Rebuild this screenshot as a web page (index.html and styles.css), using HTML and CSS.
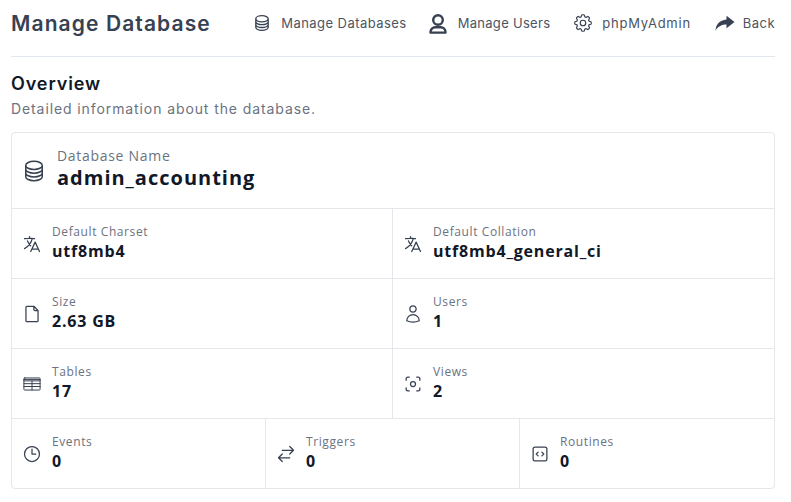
FILE: index.html
```html
<!DOCTYPE html>
<html lang="en">
<head>
<meta charset="utf-8">
<title>Manage Database</title>
<link rel="stylesheet" href="styles.css">
</head>
<body>
<svg class="defs" width="0" height="0" aria-hidden="true">
  <defs>
    <symbol id="i-db" viewBox="0 0 24 24"><path d="M20.25 6.375c0 2.278-3.694 4.125-8.25 4.125S3.75 8.653 3.75 6.375m16.5 0c0-2.278-3.694-4.125-8.25-4.125S3.75 4.097 3.75 6.375m16.5 0v11.25c0 2.278-3.694 4.125-8.25 4.125s-8.25-1.847-8.25-4.125V6.375m16.5 0v3.75m-16.5-3.75v3.75m16.5 0v3.75C20.25 16.153 16.556 18 12 18s-8.25-1.847-8.25-4.125v-3.75m16.5 0c0 2.278-3.694 4.125-8.25 4.125s-8.25-1.847-8.25-4.125"/></symbol>
    <symbol id="i-lang" viewBox="0 0 24 24"><path d="m10.5 21 5.25-11.25L21 21m-9-3h7.5M3 5.621a48.474 48.474 0 0 1 6-.371m0 0c1.12 0 2.233.038 3.334.114M9 5.25V3m3.334 2.364C11.176 10.658 7.69 15.08 3 17.502m9.334-12.138c.896.061 1.785.147 2.666.257m-4.589 8.495a18.023 18.023 0 0 1-3.827-5.802"/></symbol>
    <symbol id="i-doc" viewBox="0 0 24 24"><path d="M6 2.75h8.2L19.25 7.8V20a1.25 1.25 0 0 1-1.25 1.25H6A1.25 1.25 0 0 1 4.75 20V4A1.25 1.25 0 0 1 6 2.75ZM14.2 2.75V6.5a1.3 1.3 0 0 0 1.3 1.3h3.75"/></symbol>
    <symbol id="i-user" viewBox="0 0 24 24"><path d="M15.75 6a3.75 3.75 0 1 1-7.5 0 3.75 3.75 0 0 1 7.5 0ZM4.501 20.118a7.5 7.5 0 0 1 14.998 0A17.933 17.933 0 0 1 12 21.75c-2.676 0-5.216-.584-7.499-1.632Z"/></symbol>
    <symbol id="i-user-bold" viewBox="0 0 24 24"><path d="M16.800 9a4.800 4.800 0 1 1-9.600 0 4.800 4.800 0 0 1 9.600 0ZM4.500 21.600v-.6a4.800 4.800 0 0 1 4.800-4.800h5.400a4.800 4.800 0 0 1 4.800 4.800v.6Z"/></symbol>
    <symbol id="i-table" viewBox="0 0 24 24"><path d="M3.200 4.750h17.600a.9.9 0 0 1 .9.9v12.700a.9.9 0 0 1-.9.9H3.200a.9.9 0 0 1-.9-.9V5.650a.9.9 0 0 1 .9-.9ZM2.300 6.500h19.400M2.300 8.250h19.400M2.300 11.600h19.400M2.300 15h19.400M12 8.250v11"/></symbol>
    <symbol id="i-view" viewBox="0 0 24 24"><path d="M7.500 3.750H6A2.250 2.250 0 0 0 3.750 6v1.500M16.500 3.750H18A2.250 2.250 0 0 1 20.250 6v1.500m0 9V18A2.250 2.250 0 0 1 18 20.250h-1.500m-9 0H6A2.250 2.250 0 0 1 3.750 18v-1.500M15 12a3 3 0 1 1-6 0 3 3 0 0 1 6 0Z"/></symbol>
    <symbol id="i-clock" viewBox="0 0 24 24"><path d="M12 6v6h4.500m4.500 0a9 9 0 1 1-18 0 9 9 0 0 1 18 0Z"/></symbol>
    <symbol id="i-swap" viewBox="0 0 24 24"><path d="M7.500 21 3 16.500m0 0L7.500 12M3 16.500h13.500m0-13.500L21 7.500m0 0L16.500 12M21 7.500H7.500"/></symbol>
    <symbol id="i-code" viewBox="0 0 24 24"><path d="M14.250 9.750 16.500 12l-2.250 2.250m-4.500 0L7.500 12l2.250-2.250M6 20.250h12A2.250 2.250 0 0 0 20.250 18V6A2.250 2.250 0 0 0 18 3.750H6A2.250 2.250 0 0 0 3.750 6v12A2.250 2.250 0 0 0 6 20.250Z"/></symbol>
    <symbol id="i-cog" viewBox="0 0 24 24"><path d="M10.343 3.94c.09-.542.56-.94 1.11-.94h1.093c.55 0 1.02.398 1.11.94l.149.894c.07.424.384.764.78.93.398.164.855.142 1.205-.108l.737-.527a1.125 1.125 0 0 1 1.45.12l.773.774c.39.389.44 1.002.12 1.45l-.527.737c-.25.35-.272.806-.107 1.204.165.397.505.71.93.78l.893.15c.543.09.94.559.94 1.109v1.094c0 .55-.397 1.02-.94 1.11l-.894.149c-.424.07-.764.383-.929.78-.165.398-.143.854.107 1.204l.527.738c.32.447.269 1.06-.12 1.45l-.774.773a1.125 1.125 0 0 1-1.449.12l-.738-.527c-.35-.25-.806-.272-1.203-.107-.398.165-.71.505-.781.929l-.149.894c-.09.542-.56.94-1.11.94h-1.094c-.55 0-1.019-.398-1.11-.94l-.148-.894c-.071-.424-.384-.764-.781-.93-.398-.164-.854-.142-1.204.108l-.738.527c-.447.32-1.06.269-1.45-.12l-.773-.774a1.125 1.125 0 0 1-.12-1.45l.527-.737c.25-.35.272-.806.108-1.204-.165-.397-.506-.71-.93-.78l-.894-.15c-.542-.09-.94-.56-.94-1.109v-1.094c0-.55.398-1.02.94-1.11l.894-.149c.424-.07.765-.383.93-.78.165-.398.143-.854-.108-1.204l-.526-.738a1.125 1.125 0 0 1 .12-1.45l.773-.773a1.125 1.125 0 0 1 1.45-.12l.737.527c.35.25.807.272 1.204.107.397-.165.71-.505.78-.929l.15-.894ZM15 12a3 3 0 1 1-6 0 3 3 0 0 1 6 0Z"/></symbol>
  </defs>
</svg>

<header class="topbar">
  <h1 class="title">Manage Database</h1>
  <nav class="nav">
    <a class="nav-link link-db"><svg class="ico ico-nav-db"><use href="#i-db"/></svg>Manage Databases</a>
    <a class="nav-link link-users"><svg class="ico ico-nav-user"><use href="#i-user-bold"/></svg>Manage Users</a>
    <a class="nav-link link-pma"><svg class="ico ico-nav-cog"><use href="#i-cog"/></svg>phpMyAdmin</a>
    <a class="nav-link link-back"><svg class="ico-back" viewBox="0 0 20 20"><path d="M11.500 2.700 19.500 9l-8 6.300v-3.700C6.800 11.600 3.100 13.200.5 17.800c.3-6.200 4-10.800 11-11.400Z"/></svg>Back</a>
  </nav>
</header>

<section class="intro">
  <h2 class="section-title">Overview</h2>
  <p class="section-sub">Detailed information about the database.</p>
</section>

<section class="card">
  <div class="row row-name">
    <div class="cell cell-name">
      <svg class="ico ico-lg"><use href="#i-db"/></svg>
      <div class="text text-lg"><div class="label label-lg">Database Name</div><div class="value value-lg">admin_accounting</div></div>
    </div>
  </div>
  <div class="row row-2">
    <div class="cell"><svg class="ico"><use href="#i-lang"/></svg><div class="text"><div class="label">Default Charset</div><div class="value">utf8mb4</div></div></div>
    <div class="cell"><svg class="ico"><use href="#i-lang"/></svg><div class="text"><div class="label">Default Collation</div><div class="value">utf8mb4_general_ci</div></div></div>
  </div>
  <div class="row row-2">
    <div class="cell"><svg class="ico"><use href="#i-doc"/></svg><div class="text"><div class="label">Size</div><div class="value">2.63 GB</div></div></div>
    <div class="cell"><svg class="ico"><use href="#i-user"/></svg><div class="text"><div class="label">Users</div><div class="value">1</div></div></div>
  </div>
  <div class="row row-2">
    <div class="cell"><svg class="ico ico-thin"><use href="#i-table"/></svg><div class="text"><div class="label">Tables</div><div class="value">17</div></div></div>
    <div class="cell"><svg class="ico"><use href="#i-view"/></svg><div class="text"><div class="label">Views</div><div class="value">2</div></div></div>
  </div>
  <div class="row row-3">
    <div class="cell"><svg class="ico"><use href="#i-clock"/></svg><div class="text"><div class="label">Events</div><div class="value">0</div></div></div>
    <div class="cell"><svg class="ico"><use href="#i-swap"/></svg><div class="text"><div class="label">Triggers</div><div class="value">0</div></div></div>
    <div class="cell"><svg class="ico"><use href="#i-code"/></svg><div class="text"><div class="label">Routines</div><div class="value">0</div></div></div>
  </div>
</section>
</body>
</html>
```

FILE: styles.css
```css
* { box-sizing: border-box; }
html, body { margin: 0; padding: 0; background: #fff; }
body { padding: 0 16px 0 11px; font-family: "Open Sans", sans-serif; overflow: hidden; }
.defs { position: absolute; }

.topbar {
  height: 57px;
  display: flex;
  align-items: center;
  justify-content: space-between;
  padding-bottom: 10px;
  border-bottom: 1px solid #e2e8f0;
}
.title {
  margin: 0;
  font-family: Inter, sans-serif;
  font-size: 21px;
  font-weight: 600;
  letter-spacing: 1.1px;
  color: #374151;
}
.nav { display: flex; align-items: center; gap: 20px; }
.nav-link {
  display: flex;
  align-items: center;
  font-family: Inter, sans-serif;
  font-size: 13px;
  letter-spacing: 0.45px;
  color: #4b5563;
}
.link-db { gap: 10px; margin-right: -1px; }
.link-users { gap: 8px; letter-spacing: 0.3px; }
.link-pma { gap: 8px; margin-left: 2px; letter-spacing: 0.75px; }
.link-back { gap: 8px; margin-left: 4px; }

.ico {
  width: 20px;
  height: 20px;
  flex: none;
  fill: none;
  stroke: #374151;
  stroke-width: 1.5;
  stroke-linecap: round;
  stroke-linejoin: round;
}
.ico-thin { stroke-width: 1.2; }
.ico-nav-db { width: 18px; height: 18px; stroke-width: 1.8; }
.ico-nav-user { width: 24px; height: 24px; stroke-width: 2.4; }
.ico-nav-cog { width: 22px; height: 22px; stroke-width: 1.3; }
.ico-back { width: 20px; height: 20px; fill: #374151; flex: none; }
.ico-lg { width: 24px; height: 24px; }

.intro { padding-top: 15px; height: 75px; }
.section-title {
  margin: 0;
  font-family: Inter, sans-serif;
  font-size: 18px;
  line-height: 24px;
  font-weight: 600;
  letter-spacing: 0.9px;
  color: #111827;
}
.section-sub {
  margin: 3px 0 0;
  font-family: Inter, sans-serif;
  font-size: 14px;
  line-height: 20px;
  letter-spacing: 0.9px;
  color: #6b7280;
}

.card {
  height: 357px;
  border: 1px solid #e5e7eb;
  border-radius: 4px;
  overflow: hidden;
}
.row { display: grid; height: 70px; border-top: 1px solid #e5e7eb; }
.row-name { height: 75px; border-top: 0; }
.row-2 { grid-template-columns: 380px 1fr; }
.row-3 { grid-template-columns: 253px 254px 1fr; }
.cell {
  display: flex;
  align-items: center;
  gap: 10px;
  padding: 0 10px;
  min-width: 0;
}
.cell + .cell { border-left: 1px solid #e5e7eb; }
.cell-name { gap: 11px; }
.text { padding-bottom: 2px; }
.text-lg { padding-bottom: 5px; }
.label {
  font-size: 12px;
  line-height: 16px;
  letter-spacing: 0.6px;
  color: #6b7280;
}
.value {
  font-size: 16px;
  line-height: 22px;
  font-weight: 700;
  letter-spacing: 0.8px;
  color: #111827;
}
.label-lg { font-size: 14px; line-height: 20px; letter-spacing: 0.7px; }
.value-lg { font-size: 20px; line-height: 24px; letter-spacing: 1px; }
```
